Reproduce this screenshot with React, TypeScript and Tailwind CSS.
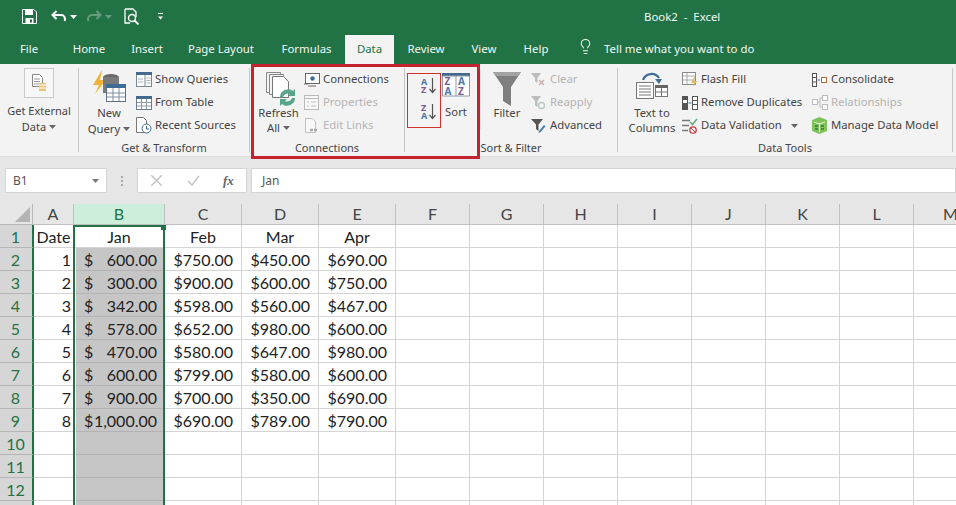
import type { ReactNode } from "react";
import { Lightbulb } from "lucide-react";

const tabs = [
	{ name: "File", cls: "w-[58px]" },
	{ name: "Home", cls: "w-[62px]" },
	{ name: "Insert", cls: "w-[54px]" },
	{ name: "Page Layout", cls: "w-[94px]" },
	{ name: "Formulas", cls: "w-[77px]" },
	{ name: "Data", cls: "w-[49px] bg-[#f3f3f3] text-[#217346]" },
	{ name: "Review", cls: "w-[64px]" },
	{ name: "View", cls: "w-[52px]" },
	{ name: "Help", cls: "w-[52px]" },
];

const columns = [
	{ name: "A", cls: "w-[41px]" },
	{ name: "B", cls: "w-[91px] bg-[#cdeeda] text-[#217346]" },
	{ name: "C", cls: "w-[77px]" },
	{ name: "D", cls: "w-[77px]" },
	{ name: "E", cls: "w-[77px]" },
	{ name: "F", cls: "w-[74px]" },
	{ name: "G", cls: "w-[74px]" },
	{ name: "H", cls: "w-[74px]" },
	{ name: "I", cls: "w-[74px]" },
	{ name: "J", cls: "w-[74px]" },
	{ name: "K", cls: "w-[74px]" },
	{ name: "L", cls: "w-[74px]" },
	{ name: "M", cls: "w-[74px]" },
];

const rows = [
	["Date", "Jan", "Feb", "Mar", "Apr"],
	["1", "600.00", "$750.00", "$450.00", "$690.00"],
	["2", "300.00", "$900.00", "$600.00", "$750.00"],
	["3", "342.00", "$598.00", "$560.00", "$467.00"],
	["4", "578.00", "$652.00", "$980.00", "$600.00"],
	["5", "470.00", "$580.00", "$647.00", "$980.00"],
	["6", "600.00", "$799.00", "$580.00", "$600.00"],
	["7", "900.00", "$700.00", "$350.00", "$690.00"],
	["8", "1,000.00", "$690.00", "$789.00", "$790.00"],
	["", "", "", "", ""],
	["", "", "", "", ""],
	["", "", "", "", ""],
	["", "", "", "", ""],
];

const blankCols = ["F", "G", "H", "I", "J", "K", "L", "M"];

function Caret({ className = "" }: { className?: string }) {
	return (
		<svg width="7" height="4" viewBox="0 0 7 4" className={className}>
			<path d="M0 0h7L3.500 4z" fill="currentColor" />
		</svg>
	);
}

function Small({
	icon,
	label,
	muted,
	caret,
}: {
	icon: ReactNode;
	label: string;
	muted?: boolean;
	caret?: boolean;
}) {
	return (
		<div className={`flex h-[23px] items-center gap-[3px] whitespace-nowrap ${muted ? "text-[#b4b4b4]" : ""}`}>
			<span className="flex h-[18px] w-[17px] shrink-0 items-center justify-center">{icon}</span>
			<span>{label}</span>
			{caret ? <Caret className="ml-[6px] text-[#666]" /> : null}
		</div>
	);
}

function Group({
	label,
	cls,
	children,
}: {
	label: string;
	cls: string;
	children: ReactNode;
}) {
	return (
		<div className={`flex h-[91px] shrink-0 ${cls}`}>
			<div className="flex min-w-0 flex-1 flex-col">
				<div className="flex h-[75px] items-start">{children}</div>
				<div className="text-center text-[11px] leading-[16px]">{label}</div>
			</div>
			<div className="mt-[3px] h-[84px] w-px shrink-0 bg-[#c6c6c6]" />
		</div>
	);
}

function TableIcon() {
	return (
		<svg width="16" height="16" viewBox="0 0 16 16">
			<rect x="0.500" y="1.500" width="15" height="13" fill="#fff" stroke="#6b7d90" />
			<rect x="0" y="1" width="16" height="3" fill="#44698f" />
			<path d="M5.500 4v10M10.500 4v10M1 7.500h14M1 11h14" stroke="#8b99a8" />
		</svg>
	);
}

function SortAZ({ flip }: { flip?: boolean }) {
	return (
		<svg width="16" height="17" viewBox="0 0 16 17" className="overflow-visible">
			<text fontSize="9" fontWeight="700" fontFamily="Noto Sans, sans-serif">
				<tspan x="0" y="7.500" fill={flip ? "#7a5a92" : "#4a78a8"}>
					{flip ? "Z" : "A"}
				</tspan>
				<tspan x="0" y="15.500" fill={flip ? "#4a78a8" : "#7a5a92"}>
					{flip ? "A" : "Z"}
				</tspan>
			</text>
			<path d="M11.500 1v14M8.500 12l3 3.500 3-3.500" fill="none" stroke="#555" strokeWidth="1.200" />
		</svg>
	);
}

function Ribbon() {
	return (
		<div className="flex h-[92px] bg-[#f3f3f3] pt-px font-['Noto_Sans',sans-serif] text-[11.3px] text-[#444]">
			<Group label="" cls="w-[79px]">
				<div className="flex w-full flex-col items-center pt-[3px]">
					<div className="flex h-[30px] w-[30px] items-center justify-center border border-[#c9c9c9] bg-[#f7f7f7]">
						<svg width="16" height="18" viewBox="0 0 16 18">
							<path d="M1.500.5h7l3 3v9h-10z" fill="#fff" stroke="#888" />
							<path d="M3 5h6M3 7.500h6M3 10h6" stroke="#999" />
							<path d="M8 9h7v8H8z" fill="#e9c477" />
							<path d="M8 11h7M8 14h7" stroke="#fff" />
						</svg>
					</div>
					<div className="mt-[5px] text-center text-[11px] leading-[16px]">
						Get External
						<div className="flex items-center justify-center gap-[3px]">
							Data <Caret className="text-[#666]" />
						</div>
					</div>
				</div>
			</Group>

			<Group label="Get & Transform" cls="w-[171px]">
				<div className="flex w-[56px] flex-col items-center pt-[5px] pl-[4px]">
					<svg width="34" height="33" viewBox="0 0 34 33">
						<path d="M10 0 1 15h6L3 24l11-14H8z" fill="#efb23a" />
						<ellipse cx="19" cy="7" rx="8" ry="3" fill="#6a6a6a" />
						<path d="M11 7v16h16V7z" fill="#7a7a7a" />
						<rect x="14.500" y="14.500" width="19" height="17" fill="#fff" stroke="#5d6f82" />
						<rect x="14" y="14" width="20" height="4" fill="#3f6c96" />
						<path d="M21 18v13M27 18v13M15 23h18M15 27h18" stroke="#7f8e9d" />
					</svg>
					<div className="mt-[2px] text-center leading-[16px]">
						New
						<div className="flex items-center justify-center gap-[3px]">
							Query <Caret className="text-[#666]" />
						</div>
					</div>
				</div>
				<div className="pt-[3px]">
					<Small
						label="Show Queries"
						icon={
							<svg width="16" height="15" viewBox="0 0 16 15">
								<rect x="0.500" y="0.500" width="15" height="14" fill="#fff" stroke="#7a8794" />
								<rect x="0" y="0" width="16" height="3" fill="#44698f" />
								<path d="M9 3v11" stroke="#7a8794" />
								<path d="M10.500 6h4M10.500 8.500h4M10.500 11h4M2 7h5M2 10h5" stroke="#a9b2bb" />
							</svg>
						}
					/>
					<Small label="From Table" icon={<TableIcon />} />
					<Small
						label="Recent Sources"
						icon={
							<svg width="17" height="17" viewBox="0 0 17 17">
								<path d="M1.500.5h7l3 3v12h-10z" fill="#fff" stroke="#777" />
								<circle cx="11.500" cy="11.500" r="4.500" fill="#fff" stroke="#3f6c96" />
								<path d="M11.500 9v3h2.500" fill="none" stroke="#3f6c96" />
							</svg>
						}
					/>
				</div>
			</Group>

			<Group label="Connections" cls="w-[155px]">
				<div className="ml-[4px] flex w-[49px] flex-col items-center pt-[7px]">
					<svg width="32" height="34" viewBox="0 0 32 34" className="ml-[6px]">
						<path d="M.5.5h14v20H.5z" fill="#f3f3f3" stroke="#888" />
						<path d="M3.500 2.500h14v20h-14z" fill="#f3f3f3" stroke="#888" />
						<path d="M6.500 4.500h11l5 5v16h-16z" fill="#fff" stroke="#777" />
						<path d="M14 25a8 8 0 0 1 13-6l2-2v7h-7l2-2a5 5 0 0 0-7 3z" fill="#57a58a" />
						<path d="M29 26a8 8 0 0 1-13 6l-2 2v-7h7l-2 2a5 5 0 0 0 7-3z" fill="#57a58a" />
					</svg>
					<div className="mt-[-1px] text-center leading-[15px]">
						Refresh
						<div className="flex items-center justify-center gap-[3px]">
							All <Caret className="text-[#666]" />
						</div>
					</div>
				</div>
				<div className="pt-[3px]">
					<Small
						label="Connections"
						icon={
							<svg width="16" height="14" viewBox="0 0 16 14">
								<rect x="1.500" y="0.500" width="14" height="10" fill="#fff" stroke="#666" />
								<circle cx="8.500" cy="5.500" r="2.200" fill="#3f6c96" />
								<path d="M0 11h4M4 13h8" stroke="#666" />
							</svg>
						}
					/>
					<Small
						muted
						label="Properties"
						icon={
							<svg width="15" height="15" viewBox="0 0 15 15">
								<rect x="0.500" y="0.500" width="14" height="14" fill="#f8f8f8" stroke="#bbb" />
								<path d="M1 3.500h13M3 7h2M7 7h5M3 11h2M7 11h5" stroke="#bbb" />
							</svg>
						}
					/>
					<Small
						muted
						label="Edit Links"
						icon={
							<svg width="15" height="16" viewBox="0 0 15 16">
								<path d="M1.500.5h7l3 3v11h-10z" fill="#f8f8f8" stroke="#c0c0c0" />
								<path d="M6 12h3M10 12h3" stroke="#aaa" strokeWidth="2.500" />
							</svg>
						}
					/>
				</div>
			</Group>

			<Group label="Sort & Filter" cls="w-[213px]">
				<div className="ml-[12px] flex w-[24px] flex-col items-center gap-[9px] pt-[12px]">
					<SortAZ />
					<SortAZ flip />
				</div>
				<div className="flex w-[30px] flex-col items-center pt-[8px]">
					<svg width="28" height="24" viewBox="0 0 28 24" className="overflow-visible">
						<rect x="0" y="0" width="28" height="3" fill="#44698f" />
						<path d="M.5 3h27v20H.5zM14 3v20" fill="#fff" stroke="#8b99a8" />
						<text fontSize="10" fontWeight="700" fontFamily="Noto Sans, sans-serif">
							<tspan x="2.500" y="12" fill="#7a5a92">Z</tspan>
							<tspan x="2.500" y="22" fill="#4a78a8">A</tspan>
							<tspan x="16" y="12" fill="#4a78a8">A</tspan>
							<tspan x="16" y="22" fill="#7a5a92">Z</tspan>
						</text>
					</svg>
					<div className="mt-[7px] leading-[16px]">Sort</div>
				</div>
				<div className="mt-[4px] ml-[9px] h-[60px] w-px bg-[#e0e0e0]" />
				<div className="ml-[11px] flex w-[30px] flex-col items-center pt-[7px]">
					<svg width="28" height="34" viewBox="0 0 28 34">
						<path d="M0 0h28L18 15v19l-8-5V15z" fill="#7f7f7f" />
						<path d="M0 0h28l-3 4H3z" fill="#a3a3a3" />
					</svg>
					<div className="mt-[-1px] leading-[16px]">Filter</div>
				</div>
				<div className="ml-[8px] pt-[3px]">
					<Small
						muted
						label="Clear"
						icon={
							<svg width="15" height="15" viewBox="0 0 15 15">
								<path d="M0 1h10L6.500 6v5L4 9.500V6z" fill="#bdbdbd" />
								<path d="M8 8l5 5M13 8l-5 5" stroke="#c9a9a9" strokeWidth="1.300" />
							</svg>
						}
					/>
					<Small
						muted
						label="Reapply"
						icon={
							<svg width="15" height="15" viewBox="0 0 15 15">
								<path d="M0 1h10L6.500 6v6L4 10.500V6z" fill="#bdbdbd" />
								<circle cx="10.500" cy="10.500" r="3" fill="none" stroke="#b5c9c2" strokeWidth="1.400" />
							</svg>
						}
					/>
					<Small
						label="Advanced"
						icon={
							<svg width="15" height="15" viewBox="0 0 15 15">
								<path d="M0 1h12L7.500 6.500V13L5 11V6.500z" fill="#555" />
								<path d="M8 13l5-6 1.500 1.200-5 6-2 .8z" fill="#3f7fb5" />
							</svg>
						}
					/>
				</div>
			</Group>

			<Group label="Data Tools" cls="w-[335px]">
				<div className="ml-[5px] flex w-[58px] flex-col items-center pt-[6px]">
					<svg width="32" height="28" viewBox="0 0 32 28">
						<path d="M7 9a9 9 0 0 1 16-2" fill="none" stroke="#3f6c96" strokeWidth="2.200" />
						<path d="M19 8h7l-3 5z" fill="#3f6c96" />
						<rect x="0.500" y="11.500" width="17" height="16" fill="#fff" stroke="#777" />
						<path d="M3 15h12M3 18h12M3 21h12M3 24h12" stroke="#777" />
						<rect x="19.500" y="14.500" width="12" height="11" fill="#fff" stroke="#777" />
						<rect x="19" y="14" width="13" height="3" fill="#666" />
						<path d="M25.500 17v8M20 21h11" stroke="#777" />
					</svg>
					<div className="mt-[6px] text-center leading-[15px]">
						Text to
						<div>Columns</div>
					</div>
				</div>
				<div className="w-[130px] pt-[3px]">
					<Small
						label="Flash Fill"
						icon={
							<svg width="16" height="15" viewBox="0 0 16 15">
								<rect x="0.500" y="0.500" width="13" height="12" fill="#fff" stroke="#8a8a8a" />
								<path d="M1 4h12M1 8h12M5 1v11" stroke="#aaa" />
								<path d="M12 5l-3 6h3l-1 4 4-6h-3l1-4z" fill="#e9b75a" />
							</svg>
						}
					/>
					<Small
						label="Remove Duplicates"
						icon={
							<svg width="16" height="16" viewBox="0 0 16 16">
								<rect x="0" y="1" width="6" height="14" fill="#555" />
								<rect x="1" y="5" width="4" height="3" fill="#fff" />
								<rect x="10.500" y="1.500" width="5" height="13" fill="#fff" stroke="#555" />
								<path d="M11 5.500h4M11 9.500h4" stroke="#555" />
								<path d="M6.500 8h3" stroke="#3f6c96" />
							</svg>
						}
					/>
					<Small
						label="Data Validation"
						caret
						icon={
							<svg width="17" height="16" viewBox="0 0 17 16">
								<path d="M1 2.500h8M1 7.500h7M1 12.500h6" stroke="#777" strokeWidth="1.600" />
								<path d="M9 4l2.500 2.500L16 1" fill="none" stroke="#6aa97d" strokeWidth="1.600" />
								<circle cx="12" cy="12" r="3.200" fill="#fff" stroke="#c43a3a" strokeWidth="1.300" />
								<path d="M10 10l4 4" stroke="#c43a3a" />
							</svg>
						}
					/>
				</div>
				<div className="pt-[3px]">
					<Small
						label="Consolidate"
						icon={
							<svg width="15" height="14" viewBox="0 0 15 14">
								<rect x="0.500" y="0.500" width="4" height="13" fill="#fff" stroke="#555" />
								<path d="M1 4.500h3M1 9h3" stroke="#555" />
								<path d="M5.500 7H8" stroke="#3f6c96" />
								<rect x="9.500" y="4.500" width="5" height="5" fill="#fff" stroke="#b5683a" />
							</svg>
						}
					/>
					<Small
						muted
						label="Relationships"
						icon={
							<svg width="16" height="15" viewBox="0 0 16 15">
								<rect x="0.500" y="4.500" width="5" height="5" fill="#fff" stroke="#bbb" />
								<rect x="10.500" y="0.500" width="5" height="5" fill="#fff" stroke="#bbb" />
								<rect x="10.500" y="9.500" width="5" height="5" fill="#fff" stroke="#bbb" />
								<path d="M6 7h2v-4h2M8 7v5h2" fill="none" stroke="#bbb" />
							</svg>
						}
					/>
					<Small
						label="Manage Data Model"
						icon={
							<svg width="17" height="17" viewBox="0 0 17 17">
								<path d="M8.500 0 16 3v11l-7.500 3L1 14V3z" fill="#7fc35a" />
								<path d="M8.500 6v9M3 5l5.500 2L14 5" stroke="#e8f5dc" fill="none" />
								<path d="M4 9h3M4 12h3M10 9h3M10 12h3" stroke="#2f7a46" strokeWidth="1.300" />
							</svg>
						}
					/>
				</div>
			</Group>
		</div>
	);
}

function Sheet() {
	return (
		<div className="font-['Lato',sans-serif] text-[16px] leading-[24px] text-[#222]">
			<div className="flex h-[21px] bg-[#e6e6e6] text-[#444]">
				<div className="flex w-[33px] shrink-0 items-end justify-end border-r border-b border-[#b8b8b8] p-[2px]">
					<svg width="15" height="15" viewBox="0 0 15 15">
						<path d="M15 0v15H0z" fill="#b4b4b4" />
					</svg>
				</div>
				{columns.map((col) => (
					<div
						key={col.name}
						className={`shrink-0 border-r border-b border-[#c0c0c0] text-center leading-[20px] ${col.cls}`}
					>
						{col.name}
					</div>
				))}
			</div>
			{rows.map((row, i) => (
				<div key={i} className="flex h-[23px]">
					<div className="w-[34px] shrink-0 border-r-2 border-b border-r-[#217346] border-b-[#b5b5b5] bg-[#d6d6d6] pr-px text-center text-[#217346]">
						{i + 1}
					</div>
					<div className={`w-[39px] shrink-0 border-b border-[#d4d4d4] ${i === 0 ? "text-center" : "pr-[2px] text-right"}`}>
						{row[0]}
					</div>
					<div className="relative w-[92px] shrink-0 border-x-2 border-x-[#217346] bg-white">
						{i === 0 ? (
							<>
								<div className="h-full border-t-2 border-b border-t-[#217346] border-b-[#d4d4d4] text-center leading-[20px]">{row[1]}</div>
								<span className="absolute top-0 right-[-3px] h-[5px] w-[5px] bg-[#217346]" />
							</>
						) : (
							<div className="ml-px flex h-full justify-between border-b border-[#b3b3b3] bg-[#c6c6c6] pr-[6px] pl-[8px]">
								{row[1] ? (
									<>
										<span>$</span>
										<span>{row[1]}</span>
									</>
								) : null}
							</div>
						)}
					</div>
					{[2, 3, 4].map((c) => (
						<div
							key={c}
							className={`w-[77px] shrink-0 border-r border-b border-[#d4d4d4] ${i === 0 ? "text-center" : "pr-[8px] text-right"}`}
						>
							{row[c]}
						</div>
					))}
					{blankCols.map((c) => (
						<div key={c} className="w-[74px] shrink-0 border-r border-b border-[#d4d4d4]" />
					))}
				</div>
			))}
		</div>
	);
}

export default function App() {
	return (
		<div className="relative h-[505px] w-[956px] overflow-hidden bg-white">
			<div className="h-[64px] bg-[#217346] font-['Noto_Sans',sans-serif] text-[11.4px] text-[#f2f7f4]">
				<div className="flex h-[35px] items-center pb-[2px] pl-[22px]">
					<svg width="15" height="15" viewBox="0 0 15 15">
						<path d="M.5.500h11.500l2.500 2.500v11.500H.5z" fill="none" stroke="#fff" />
						<rect x="3" y="1" width="8" height="5" fill="#fff" />
						<rect x="3.500" y="9" width="8" height="5" fill="#fff" />
						<rect x="8" y="10.500" width="2" height="3" fill="#217346" />
					</svg>
					<svg width="16" height="13" viewBox="0 0 16 13" className="ml-[14px]">
						<path d="M5.500 1 1.500 5l4 4M2 5h8a4 4 0 0 1 3.500 6" fill="none" stroke="#fff" strokeWidth="2" />
					</svg>
					<Caret className="ml-[3px] text-white" />
					<svg width="16" height="13" viewBox="0 0 16 13" className="ml-[9px] opacity-30">
						<path d="M10.500 1l4 4-4 4M14 5H6a4 4 0 0 0-3.500 6" fill="none" stroke="#fff" strokeWidth="2" />
					</svg>
					<Caret className="ml-[3px] text-white opacity-30" />
					<svg width="16" height="17" viewBox="0 0 16 17" className="ml-[12px]">
						<path d="M1 1h8l3 3v5M1 1v14h5" fill="none" stroke="#fff" strokeWidth="1.300" />
						<circle cx="8" cy="10" r="3.500" fill="none" stroke="#fff" strokeWidth="1.400" />
						<path d="M10.500 12.500 14.500 16.500" stroke="#fff" strokeWidth="1.800" />
					</svg>
					<span className="ml-[18px] flex flex-col items-center gap-[2px]">
						<span className="h-px w-[5px] bg-white" />
						<Caret className="w-[5px] text-white" />
					</span>
					<div className="ml-[481px]">Book2&nbsp; -&nbsp; Excel</div>
				</div>
				<div className="flex h-[29px]">
					{tabs.map((tab) => (
						<div key={tab.name} className={`pt-[5px] text-center ${tab.cls}`}>
							{tab.name}
						</div>
					))}
					<Lightbulb size={17} strokeWidth={1.5} className="mt-[3px] ml-[15px]" />
					<span className="ml-[10px] pt-[5px]">Tell me what you want to do</span>
				</div>
			</div>

			<Ribbon />

			<div className="flex h-[48px] items-start border-t border-[#dcdcdc] bg-[#e6e6e6] pt-[11px] font-['Noto_Sans',sans-serif] text-[12px] text-[#555]">
				<div className="ml-[5px] flex h-[25px] w-[102px] items-center justify-between border border-[#d4d4d4] bg-white pr-[7px] pl-[7px]">
					B1
					<Caret className="text-[#777]" />
				</div>
				<div className="ml-[14px] flex h-[25px] flex-col justify-center gap-[2px]">
					<span className="h-[2px] w-[2px] bg-[#aaa]" />
					<span className="h-[2px] w-[2px] bg-[#aaa]" />
					<span className="h-[2px] w-[2px] bg-[#aaa]" />
				</div>
				<div className="ml-[14px] flex h-[25px] w-[110px] items-center border border-[#d4d4d4] bg-white text-[#bbb]">
					<svg width="11" height="11" viewBox="0 0 11 11" className="ml-[13px]">
						<path d="M0 0l11 11M11 0 0 11" stroke="#c4c4c4" strokeWidth="1.500" />
					</svg>
					<svg width="13" height="11" viewBox="0 0 13 11" className="ml-[25px]">
						<path d="M1 6l4 4 7-9" fill="none" stroke="#c4c4c4" strokeWidth="1.500" />
					</svg>
					<span className="ml-[23px] font-['Liberation_Serif',serif] text-[13px] font-bold text-[#666] italic">fx</span>
				</div>
				<div className="ml-[4px] flex h-[25px] flex-1 items-center border border-[#d4d4d4] bg-white pl-[10px]">Jan</div>
			</div>

			<Sheet />

			<div className="absolute top-[64px] left-[251px] h-[95px] w-[229px] border-[3px] border-[#c4232f]" />
			<div className="absolute top-[73px] left-[407px] h-[55px] w-[34px] border border-[#d0312d]" />
		</div>
	);
}
